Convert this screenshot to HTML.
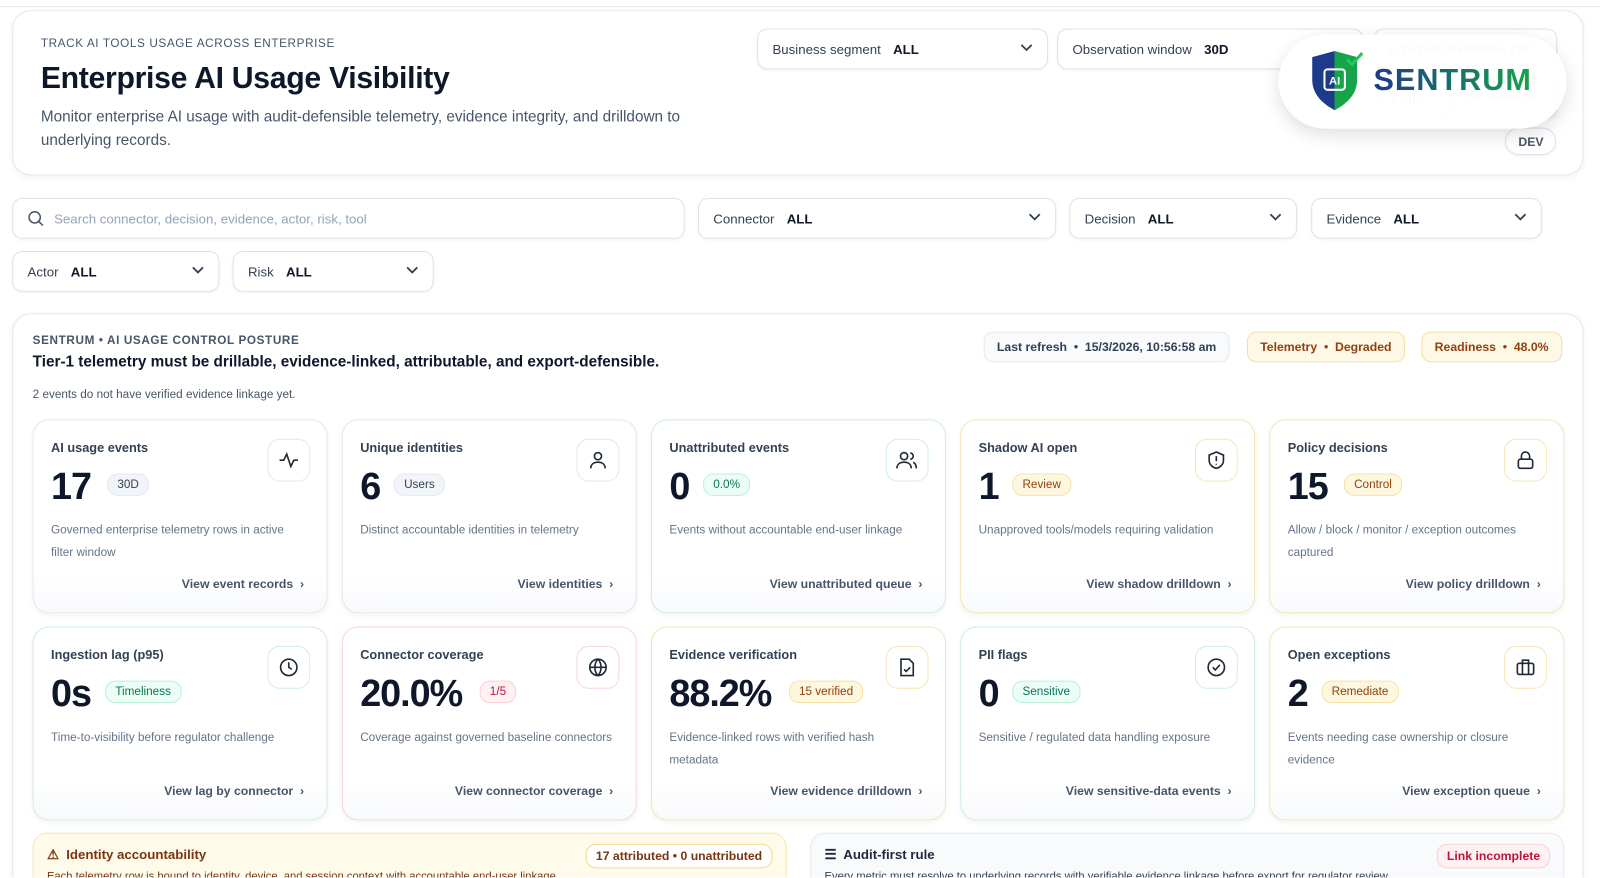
<!DOCTYPE html>
<html><head><meta charset="utf-8"><style>
*{box-sizing:border-box;margin:0;padding:0}
html,body{width:1600px;height:878px;overflow:hidden;background:#fff}
body{font-family:"Liberation Sans",sans-serif;color:#0f172a;position:relative}
#w{position:absolute;left:0;top:0;width:1568px;height:860px;overflow:hidden;transform:scale(1.0204);transform-origin:0 0}
.abs{position:absolute}
.box{position:absolute;border:1px solid #e3e7ed;border-radius:14px;background:#fff;box-shadow:0 2px 6px rgba(15,23,42,.05)}
.sel{position:absolute;border:1px solid #dfe3e9;border-radius:10px;background:#fff;font-size:13px;color:#334155;display:flex;align-items:center;padding-left:14px;box-shadow:0 1px 3px rgba(0,0,0,.05)}
.sel b{margin-left:12px;color:#0f172a}
.sel svg{position:absolute;right:14px;top:50%;margin-top:-5px}
.card{position:absolute;width:289px;height:190px;border:1px solid #e3e7ed;border-radius:16px;background:linear-gradient(#fff 80%,#f8fafc);box-shadow:0 2px 5px rgba(15,23,42,.05)}
.card .t{position:absolute;left:17px;top:20px;font-size:12.5px;color:#334155;font-weight:600}
.card .n{position:absolute;left:17px;top:44px;font-size:37px;font-weight:700;color:#0f172a;letter-spacing:-1px}
.card .p{position:absolute;top:52px;font-size:11.5px;padding:4px 9px;border-radius:10px;background:#f1f5f9;border:1px solid #e2e8f0;color:#334155}
.card .d{position:absolute;left:17px;top:97px;width:250px;font-size:11.5px;line-height:22px;color:#64748b}
.card .l{position:absolute;right:22px;top:153px;font-size:12px;color:#475569;font-weight:600}
.card .ic{position:absolute;right:16px;top:18px;width:42px;height:42px;border:1px solid #e2e8f0;border-radius:12px;display:flex;align-items:center;justify-content:center;background:#fff}
.tl{border-color:#cfeee5}.yl{border-color:#f6e6b4}.pk{border-color:#f6d6dc}
.tl .ic{border-color:#cfeee5}.yl .ic{border-color:#f6e6b4}.pk .ic{border-color:#f6d6dc}
.pg{background:#ecfdf5!important;border-color:#bbf0d6!important;color:#047857!important}
.py{background:#fef7e0!important;border-color:#f8e2a6!important;color:#92400e!important}
.pr{background:#fff1f2!important;border-color:#fbd0d6!important;color:#be123c!important}
.chip{position:absolute;font-size:12px;font-weight:600;padding:7px 12px;border-radius:9px;top:325px}
</style></head><body><div id="w">
<div class="abs" style="left:0;top:6px;width:1568px;height:1px;background:#e5e7eb"></div>
<div class="box" style="left:12px;top:10px;width:1540px;height:162px;border-radius:18px"></div>
<div class="abs" style="left:40px;top:37px;font-size:11.5px;letter-spacing:.6px;color:#475569">TRACK AI TOOLS USAGE ACROSS ENTERPRISE</div>
<div class="abs" style="left:40px;top:60px;font-size:29.6px;font-weight:700;letter-spacing:-.3px">Enterprise AI Usage Visibility</div>
<div class="abs" style="left:40px;top:103px;width:680px;font-size:15px;line-height:23px;color:#475569">Monitor enterprise AI usage with audit-defensible telemetry, evidence integrity, and drilldown to underlying records.</div>
<div class="sel" style="left:742px;top:28px;width:285px;height:40px">Business segment <b>ALL</b><svg width="12" height="8"><path d="M1 1l5 5 5-5" fill="none" stroke="#334155" stroke-width="1.8"/></svg></div>
<div class="sel" style="left:1036px;top:28px;width:300px;height:40px">Observation window <b>30D</b></div>
<div class="sel" style="left:1346px;top:28px;width:180px;height:40px;color:#cbd5e1;font-weight:600">⤓&nbsp; Export Evidence ZIP</div>
<div class="sel" style="left:1330px;top:76px;width:90px;height:40px;color:#cbd5e1;font-weight:600">☼&nbsp; Light</div>
<div class="sel" style="left:1424px;top:76px;width:102px;height:40px;color:#cbd5e1;font-weight:600">⟳&nbsp; Refresh</div>
<div class="sel" style="left:1475px;top:125px;width:50px;height:27px;border-radius:14px;font-weight:700;font-size:12px;color:#475569;padding-left:12px">DEV</div>
<div class="abs" style="left:1253px;top:34px;width:282px;height:92px;border-radius:46px;background:rgba(255,255,255,.9);box-shadow:0 6px 18px rgba(0,0,0,.13)"></div>
<svg class="abs" style="left:1282px;top:48px" width="60" height="62" viewBox="0 0 60 62"><defs><linearGradient id="g" x1="0" x2="1"><stop offset=".5" stop-color="#1e3a8a"/><stop offset=".5" stop-color="#16a34a"/></linearGradient></defs><path d="M4 8L26 2 48 8V30C48 45 37 54 26 60 15 54 4 45 4 30Z" fill="url(#g)"/><path d="M38 10l5 5 10-11" fill="none" stroke="#22c55e" stroke-width="3"/><rect x="16" y="20" width="20" height="20" rx="3" fill="none" stroke="#fff" stroke-width="2"/><text x="26" y="35" font-size="11" fill="#fff" text-anchor="middle" font-family="Liberation Sans" font-weight="700">AI</text></svg>
<div class="abs" style="left:1346px;top:62px;font-size:30px;font-weight:700;letter-spacing:1px;background:linear-gradient(90deg,#1e3a8a,#16a34a);-webkit-background-clip:text;color:transparent">SENTRUM</div>

<div class="sel" style="left:12px;top:194px;width:659px;height:40px;color:#94a3b8"><svg style="position:static;margin:0 10px 0 0" width="16" height="16"><circle cx="7" cy="7" r="5.5" fill="none" stroke="#475569" stroke-width="1.5"/><path d="M11 11l4 4" stroke="#475569" stroke-width="1.5"/></svg>Search connector, decision, evidence, actor, risk, tool</div>
<div class="sel" style="left:684px;top:194px;width:351px;height:40px">Connector <b>ALL</b><svg width="12" height="8"><path d="M1 1l5 5 5-5" fill="none" stroke="#334155" stroke-width="1.8"/></svg></div>
<div class="sel" style="left:1048px;top:194px;width:223px;height:40px">Decision <b>ALL</b><svg width="12" height="8"><path d="M1 1l5 5 5-5" fill="none" stroke="#334155" stroke-width="1.8"/></svg></div>
<div class="sel" style="left:1285px;top:194px;width:226px;height:40px">Evidence <b>ALL</b><svg width="12" height="8"><path d="M1 1l5 5 5-5" fill="none" stroke="#334155" stroke-width="1.8"/></svg></div>
<div class="sel" style="left:12px;top:246px;width:203px;height:40px">Actor <b>ALL</b><svg width="12" height="8"><path d="M1 1l5 5 5-5" fill="none" stroke="#334155" stroke-width="1.8"/></svg></div>
<div class="sel" style="left:228px;top:246px;width:197px;height:40px">Risk <b>ALL</b><svg width="12" height="8"><path d="M1 1l5 5 5-5" fill="none" stroke="#334155" stroke-width="1.8"/></svg></div>

<div class="box" style="left:12px;top:307px;width:1540px;height:600px;border-radius:18px"></div>
<div class="abs" style="left:32px;top:328px;font-size:11.5px;font-weight:700;letter-spacing:.6px;color:#475569">SENTRUM • AI USAGE CONTROL POSTURE</div>
<div class="abs" style="left:32px;top:346px;font-size:15px;font-weight:700">Tier-1 telemetry must be drillable, evidence-linked, attributable, and export-defensible.</div>
<div class="abs" style="left:32px;top:381px;font-size:11.5px;color:#475569">2 events do not have verified evidence linkage yet.</div>
<div class="chip" style="left:964px;background:#f8fafc;border:1px solid #e2e8f0;color:#334155">Last refresh &nbsp;•&nbsp; 15/3/2026, 10:56:58 am</div>
<div class="chip" style="left:1222px;background:#fef8e6;border:1px solid #f7dfa0;color:#92400e">Telemetry &nbsp;•&nbsp; Degraded</div>
<div class="chip" style="left:1393px;background:#fef8e6;border:1px solid #f7dfa0;color:#92400e">Readiness &nbsp;•&nbsp; 48.0%</div>

<div class="card" style="left:32px;top:411px"><div class="t">AI usage events</div><div class="n">17</div><div class="p" style="left:72px">30D</div><div class="d">Governed enterprise telemetry rows in active filter window</div><div class="l">View event records &nbsp;›</div><div class="ic"><svg width="20" height="20" fill="none" stroke="#1f2937" stroke-width="1.6"><path d="M1 10h4l3-6 4 12 3-6h4"/></svg></div></div>
<div class="card" style="left:335px;top:411px"><div class="t">Unique identities</div><div class="n">6</div><div class="p" style="left:50px">Users</div><div class="d">Distinct accountable identities in telemetry</div><div class="l">View identities &nbsp;›</div><div class="ic"><svg width="20" height="20" fill="none" stroke="#1f2937" stroke-width="1.6"><circle cx="10" cy="6" r="3.5"/><path d="M3 18c0-4 3-6 7-6s7 2 7 6"/></svg></div></div>
<div class="card tl" style="left:638px;top:411px"><div class="t">Unattributed events</div><div class="n">0</div><div class="p pg" style="left:50px">0.0%</div><div class="d">Events without accountable end-user linkage</div><div class="l">View unattributed queue &nbsp;›</div><div class="ic"><svg width="22" height="20" fill="none" stroke="#1f2937" stroke-width="1.6"><circle cx="8" cy="6" r="3.5"/><path d="M1 18c0-4 3-6 7-6s7 2 7 6M14 3a3 3 0 010 6M17 12c2 1 3 3 3 6"/></svg></div></div>
<div class="card yl" style="left:941px;top:411px"><div class="t">Shadow AI open</div><div class="n">1</div><div class="p py" style="left:50px">Review</div><div class="d">Unapproved tools/models requiring validation</div><div class="l">View shadow drilldown &nbsp;›</div><div class="ic"><svg width="20" height="20" fill="none" stroke="#1f2937" stroke-width="1.6"><path d="M10 2l7 3v5c0 4-3 7-7 8-4-1-7-4-7-8V5z"/><path d="M10 6v5M10 13.5v1"/></svg></div></div>
<div class="card yl" style="left:1244px;top:411px"><div class="t">Policy decisions</div><div class="n">15</div><div class="p py" style="left:72px">Control</div><div class="d">Allow / block / monitor / exception outcomes captured</div><div class="l">View policy drilldown &nbsp;›</div><div class="ic"><svg width="20" height="20" fill="none" stroke="#1f2937" stroke-width="1.6"><rect x="3" y="9" width="14" height="9" rx="2"/><path d="M6 9V6a4 4 0 018 0v3"/></svg></div></div>
<div class="card tl" style="left:32px;top:614px"><div class="t">Ingestion lag (p95)</div><div class="n">0s</div><div class="p pg" style="left:70px">Timeliness</div><div class="d">Time-to-visibility before regulator challenge</div><div class="l">View lag by connector &nbsp;›</div><div class="ic"><svg width="20" height="20" fill="none" stroke="#1f2937" stroke-width="1.6"><circle cx="10" cy="10" r="8"/><path d="M10 5v5l3 2"/></svg></div></div>
<div class="card pk" style="left:335px;top:614px"><div class="t">Connector coverage</div><div class="n">20.0%</div><div class="p pr" style="left:134px">1/5</div><div class="d">Coverage against governed baseline connectors</div><div class="l">View connector coverage &nbsp;›</div><div class="ic"><svg width="20" height="20" fill="none" stroke="#1f2937" stroke-width="1.6"><circle cx="10" cy="10" r="8"/><path d="M2 10h16M10 2c-4 4-4 12 0 16M10 2c4 4 4 12 0 16"/></svg></div></div>
<div class="card yl" style="left:638px;top:614px"><div class="t">Evidence verification</div><div class="n">88.2%</div><div class="p py" style="left:134px">15 verified</div><div class="d">Evidence-linked rows with verified hash metadata</div><div class="l">View evidence drilldown &nbsp;›</div><div class="ic"><svg width="20" height="20" fill="none" stroke="#1f2937" stroke-width="1.6"><path d="M4 2h8l4 4v12H4z"/><path d="M7 12l2 2 4-4"/></svg></div></div>
<div class="card tl" style="left:941px;top:614px"><div class="t">PII flags</div><div class="n">0</div><div class="p pg" style="left:50px">Sensitive</div><div class="d">Sensitive / regulated data handling exposure</div><div class="l">View sensitive-data events &nbsp;›</div><div class="ic"><svg width="20" height="20" fill="none" stroke="#1f2937" stroke-width="1.6"><circle cx="10" cy="10" r="8"/><path d="M6.5 10l2.5 2.5 4.5-5"/></svg></div></div>
<div class="card yl" style="left:1244px;top:614px"><div class="t">Open exceptions</div><div class="n">2</div><div class="p py" style="left:50px">Remediate</div><div class="d">Events needing case ownership or closure evidence</div><div class="l">View exception queue &nbsp;›</div><div class="ic"><svg width="20" height="20" fill="none" stroke="#1f2937" stroke-width="1.6"><rect x="2" y="6" width="16" height="11" rx="2"/><path d="M7 6V3h6v3M7 6v11M13 6v11"/></svg></div></div>

<div class="abs" style="left:32px;top:816px;width:739px;height:60px;border:1px solid #f8e6a8;border-radius:14px;background:#fffbeb"></div>
<div class="abs" style="left:46px;top:830px;font-size:13px;font-weight:700;color:#78350f">⚠&nbsp; Identity accountability</div>
<div class="abs" style="left:574px;top:827px;font-size:12px;padding:4px 9px;border:1px solid #f5d98a;border-radius:10px;background:#fff;color:#78350f;font-weight:600">17 attributed • 0 unattributed</div>
<div class="abs" style="left:46px;top:853px;font-size:11px;color:#78350f">Each telemetry row is bound to identity, device, and session context with accountable end-user linkage.</div>
<div class="abs" style="left:794px;top:816px;width:739px;height:60px;border:1px solid #e2e8f0;border-radius:14px;background:#f8fafc"></div>
<div class="abs" style="left:808px;top:830px;font-size:13px;font-weight:700;color:#1e293b">☰&nbsp; Audit-first rule</div>
<div class="abs" style="left:1408px;top:827px;font-size:12px;padding:4px 9px;border:1px solid #fbcfd6;border-radius:10px;background:#fff1f2;color:#be123c;font-weight:600">Link incomplete</div>
<div class="abs" style="left:808px;top:853px;font-size:11px;color:#334155">Every metric must resolve to underlying records with verifiable evidence linkage before export for regulator review.</div>
</div></body></html>
